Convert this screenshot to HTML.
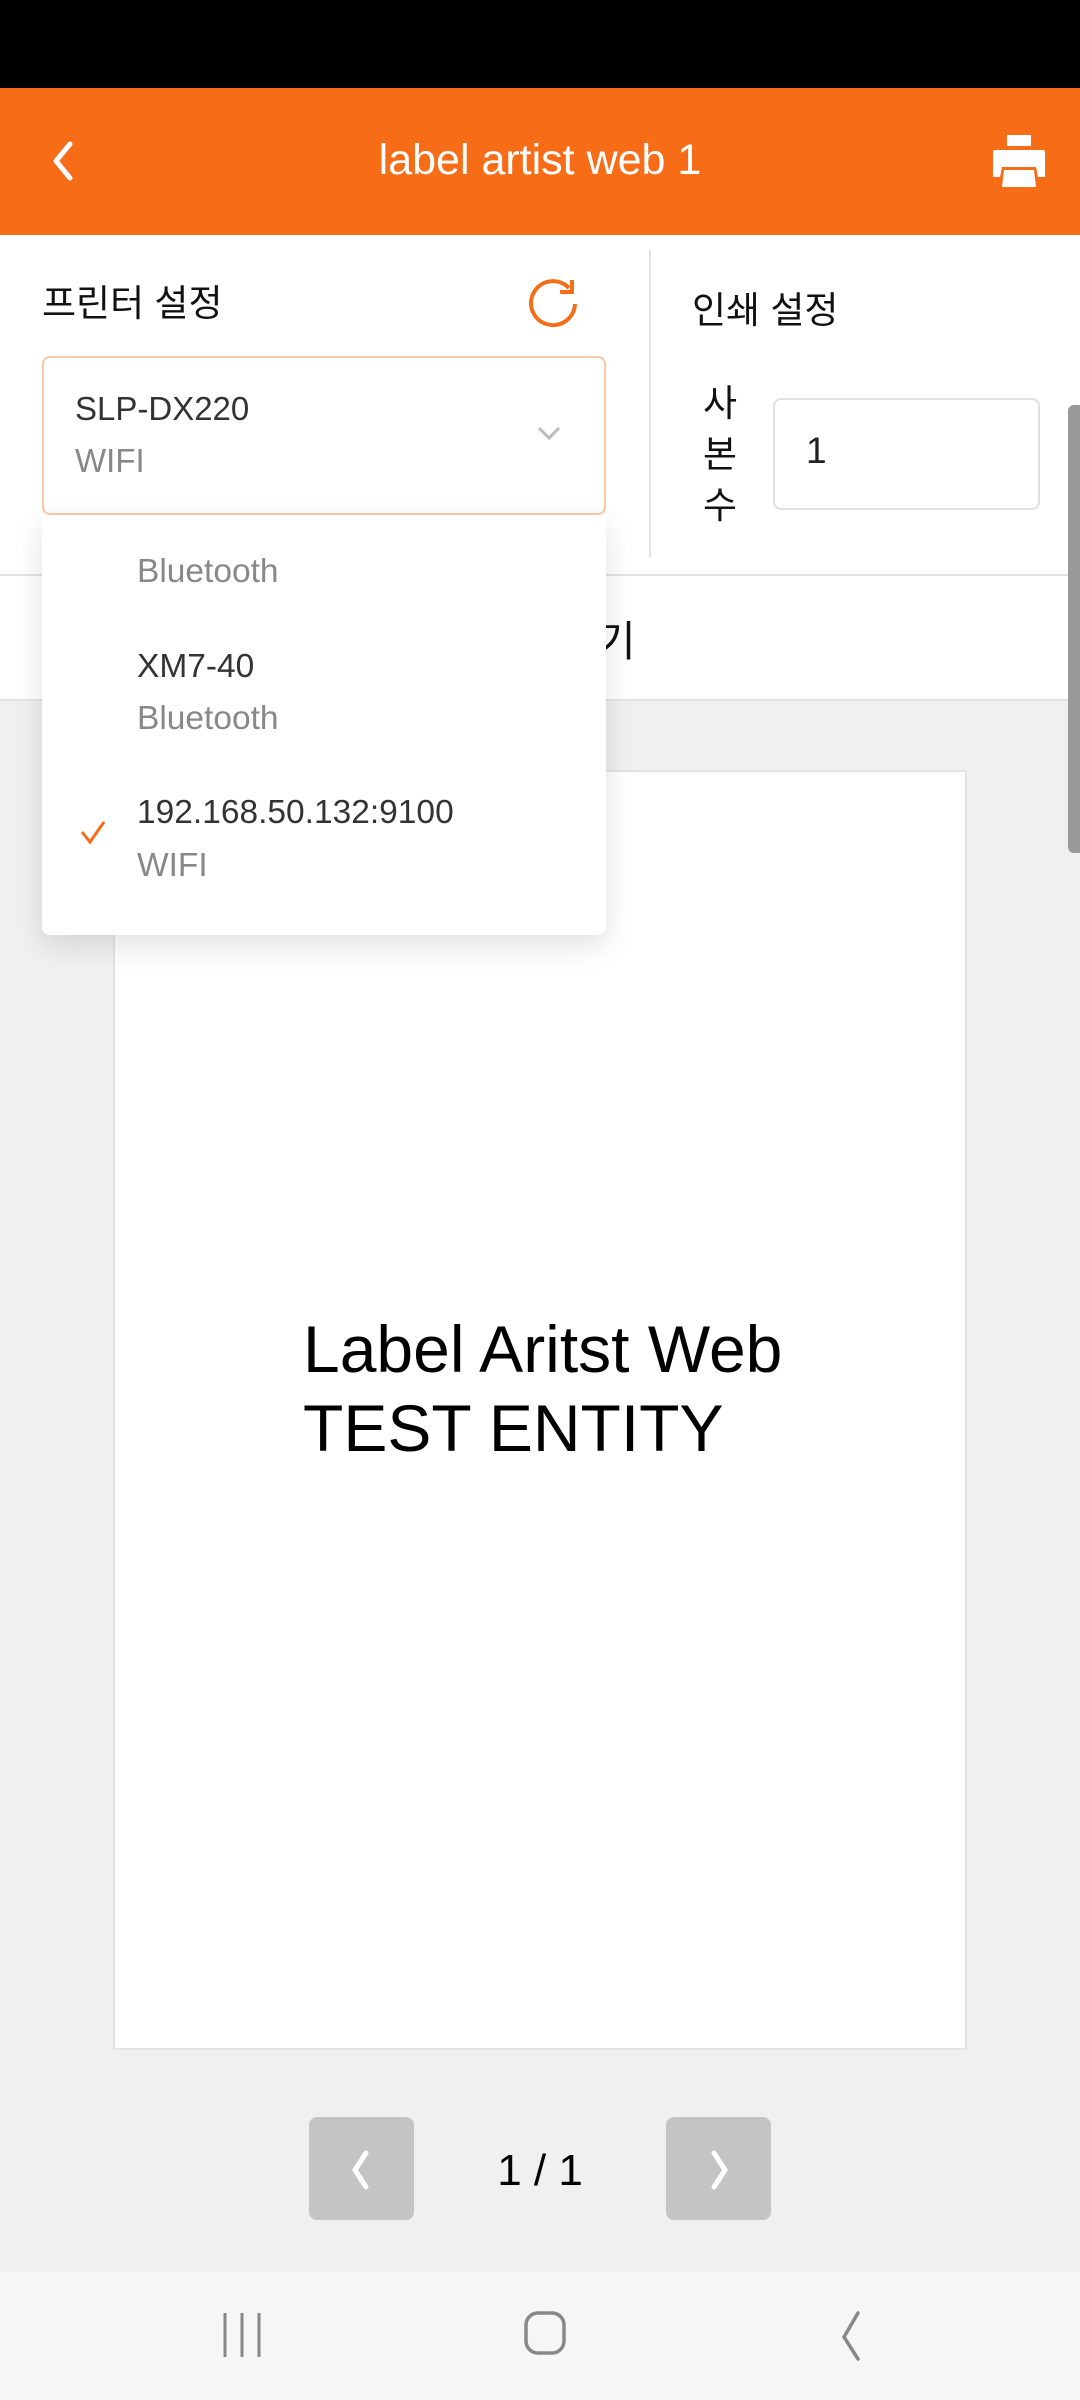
<!DOCTYPE html>
<html><head><meta charset="utf-8"><style>
*{margin:0;padding:0;box-sizing:border-box}
body{width:1080px;height:2400px;position:relative;overflow:hidden;background:#f0f0f0;font-family:"Liberation Sans","Noto Sans CJK KR",sans-serif}
.a{position:absolute}
</style></head><body>
<div class="a" style="left:0;top:0;width:1080px;height:88px;background:#000"></div>
<div class="a" style="left:0;top:88px;width:1080px;height:147px;background:#f76c17"></div>
<svg class="a" style="left:44px;top:138px" width="40" height="46"><path d="M26 6 L12 23 L26 40" stroke="#fff" stroke-width="5" fill="none" stroke-linecap="round" stroke-linejoin="round"/></svg>
<div class="a" style="left:0;top:132px;width:1080px;text-align:center;color:#fff;font-size:43px;line-height:56px">label artist web 1</div>
<svg class="a" style="left:990px;top:133px" width="60" height="60"><rect x="17" y="2" width="24" height="11" fill="#fff"/><path d="M3 19 Q3 17 5 17 L53 17 Q55 17 55 19 L55 44 L48 44 L46 34 L12 34 L10 44 L3 44Z" fill="#fff"/><path d="M14 37 L44 37 L46 54 L12 54Z" fill="#fff"/></svg>
<div class="a" style="left:0;top:235px;width:1080px;height:340px;background:#fff"></div>
<div class="a" style="left:42px;top:273px;font-size:37px;color:#111">프린터 설정</div>
<svg class="a" style="left:524px;top:276px" width="60" height="54"><path d="M45 12 A22 22 0 1 0 51 28" stroke="#f76c17" stroke-width="4" fill="none"/><path d="M48 4 L48 16 L36 16" stroke="#f76c17" stroke-width="4" fill="none"/></svg>
<div class="a" style="left:649px;top:250px;width:2px;height:307px;background:#e2e2e2"></div>
<div class="a" style="left:692px;top:280px;font-size:37px;color:#111">인쇄 설정</div>
<div class="a" style="left:42px;top:356px;width:564px;height:159px;border:2px solid #f9c9a8;border-radius:8px;background:#fff"></div>
<div class="a" style="left:75px;top:390px;font-size:33px;color:#333">SLP-DX220</div>
<div class="a" style="left:75px;top:442px;font-size:33px;color:#888">WIFI</div>
<svg class="a" style="left:536px;top:424px" width="30" height="20"><path d="M3 4 L13 14 L23 4" stroke="#bbb" stroke-width="3" fill="none"/></svg>
<div class="a" style="left:700px;top:378px;font-size:37px;color:#111;line-height:51px;width:40px;text-align:center">사<br>본<br>수</div>
<div class="a" style="left:773px;top:398px;width:267px;height:112px;border:2px solid #e0e0e0;border-radius:8px;background:#fff"></div>
<div class="a" style="left:806px;top:430px;font-size:37px;color:#222">1</div>
<div class="a" style="left:0;top:574px;width:1080px;height:2px;background:#e2e2e2"></div>
<div class="a" style="left:0;top:576px;width:1080px;height:124px;background:#fff"></div>
<div class="a" style="left:597px;top:608px;font-size:42px;color:#111">기</div>
<div class="a" style="left:0;top:699px;width:1080px;height:2px;background:#e2e2e2"></div>
<div class="a" style="left:1068px;top:405px;width:12px;height:448px;background:#999;border-radius:6px 0 0 6px"></div>
<div class="a" style="left:113px;top:770px;width:854px;height:1280px;background:#fff;border:2px solid #e3e3e3"></div>
<div class="a" style="left:303px;top:1310px;font-size:66px;color:#000;line-height:79px">Label Aritst Web<br>TEST ENTITY</div>
<div class="a" style="left:42px;top:515px;width:564px;height:420px;background:#fff;border-radius:0 0 8px 8px;box-shadow:0 10px 30px rgba(0,0,0,.12)"></div>
<div class="a" style="left:137px;top:553px;font-size:33.5px;color:#888">Bluetooth</div>
<div class="a" style="left:137px;top:648px;font-size:33.5px;color:#333">XM7-40</div>
<div class="a" style="left:137px;top:700px;font-size:33.5px;color:#888">Bluetooth</div>
<div class="a" style="left:137px;top:794px;font-size:33.5px;color:#333">192.168.50.132:9100</div>
<div class="a" style="left:137px;top:847px;font-size:33.5px;color:#888">WIFI</div>
<svg class="a" style="left:78px;top:818px" width="32" height="30"><path d="M4 14 L12 24 L26 4" stroke="#f76c17" stroke-width="3" fill="none"/></svg>
<div class="a" style="left:309px;top:2117px;width:105px;height:103px;background:#c4c4c4;border-radius:8px"></div>
<svg class="a" style="left:340px;top:2145px" width="40" height="50"><path d="M26 8 L15 25 L26 42" stroke="#fff" stroke-width="5" fill="none" stroke-linecap="round"/></svg>
<div class="a" style="left:666px;top:2117px;width:105px;height:103px;background:#c4c4c4;border-radius:8px"></div>
<svg class="a" style="left:700px;top:2145px" width="40" height="50"><path d="M14 8 L25 25 L14 42" stroke="#fff" stroke-width="5" fill="none" stroke-linecap="round"/></svg>
<div class="a" style="left:440px;top:2146px;width:200px;text-align:center;font-size:44px;color:#000">1 / 1</div>
<div class="a" style="left:0;top:2272px;width:1080px;height:128px;background:#f6f6f6"></div>
<svg class="a" style="left:215px;top:2305px" width="60" height="60"><path d="M10 8V52M27 8V52M44 8V52" stroke="#888" stroke-width="3"/></svg>
<svg class="a" style="left:515px;top:2305px" width="60" height="60"><rect x="11" y="8" width="38" height="40" rx="12" stroke="#888" stroke-width="3.5" fill="none"/></svg>
<svg class="a" style="left:820px;top:2305px" width="60" height="60"><path d="M38 8 L24 32 L38 54" stroke="#888" stroke-width="3.5" fill="none" stroke-linecap="round"/></svg>
</body></html>
